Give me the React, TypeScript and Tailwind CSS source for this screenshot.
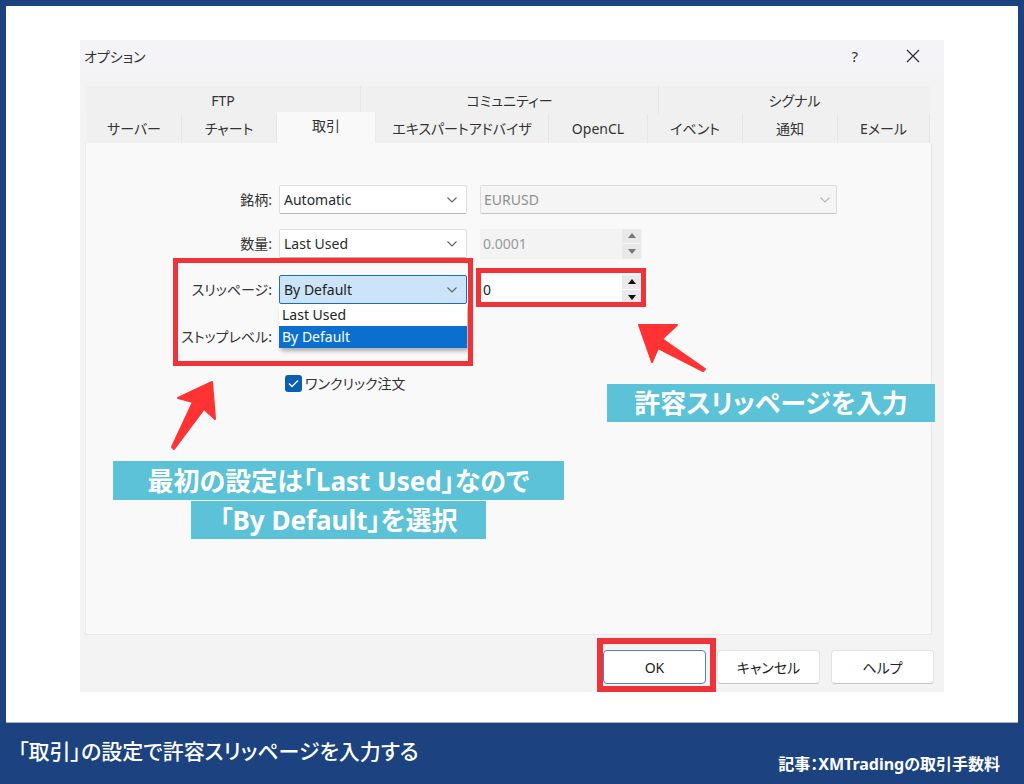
const jp = "font-['Noto_Sans','Noto_Sans_CJK_JP',sans-serif]";

function Chevron({ className = "text-[#5f5f5f]" }: { className?: string }) {
  return (
    <svg width="12" height="8" viewBox="0 0 12 8" className={className}>
      <path d="M1.5 1.5 L6 6 L10.5 1.5" fill="none" stroke="currentColor" strokeWidth="1.1" />
    </svg>
  );
}

function Combo({ text, active = false }: { text: string; active?: boolean }) {
  return (
    <div
      className={
        "flex w-[188px] h-[29px] items-center justify-between pl-[4px] pr-[8px] text-[14px] rounded-[2px] border " +
        (active
          ? "bg-[#cce4f7] border-[#1f6fb5] text-[#222]"
          : "bg-white border-[#dfdfdf] border-b-[#b5b5b5] text-[#2a2a2a]")
      }
    >
      <span>{text}</span>
      <Chevron />
    </div>
  );
}

function Spin({ text, disabled = false }: { text: string; disabled?: boolean }) {
  return (
    <div
      className={
        "flex w-[162px] h-[30px] items-center justify-between pl-[3px] pr-px text-[14px] " +
        (disabled ? "bg-[#f3f3f3] text-[#9a9a9a]" : "bg-white text-[#222]")
      }
    >
      <span>{text}</span>
      <div className="flex flex-col w-[19px] h-full gap-px">
        {[0, 1].map((i) => (
          <div key={i} className="flex flex-1 items-center justify-center bg-[#e9e9e9]">
            <svg width="8" height="5" viewBox="0 0 8 5" className={disabled ? "text-[#777]" : "text-[#111]"}>
              <path d={i === 0 ? "M4 0 L8 5 L0 5 Z" : "M0 0 L8 0 L4 5 Z"} fill="currentColor" />
            </svg>
          </div>
        ))}
      </div>
    </div>
  );
}

function Row({ label, children, className = "" }: { label: string; children?: React.ReactNode; className?: string }) {
  return (
    <div className={"flex items-center " + className}>
      <span className="w-[186px] pr-[7px] text-right text-[14px] text-[#333] [font-feature-settings:'palt']">{label}</span>
      {children}
    </div>
  );
}

function Tab({ w, text, active = false }: { w: string; text: string; active?: boolean }) {
  return (
    <div
      className={
        w +
        " flex items-center justify-center text-[14px] text-[#333] [font-feature-settings:'palt'] border-r " +
        (active ? "bg-[#f9f9f9] border-[#ebebeb] h-[31px] -mt-[2px] pb-[4px]" : "bg-[#f0f0f0] border-[#e6e6e6] h-[29px]")
      }
    >
      {text}
    </div>
  );
}

function Btn({ text, primary = false }: { text: string; primary?: boolean }) {
  return (
    <div
      className={
        "flex w-[103px] h-[34px] items-center justify-center rounded-[4px] text-[14px] text-[#222] [font-feature-settings:'palt'] border " +
        (primary ? "bg-white border-[#4f86b5]" : "bg-white border-[#e2e2e2] border-b-[#c4c4c4]")
      }
    >
      {text}
    </div>
  );
}

function Callout({ className, children }: { className: string; children: React.ReactNode }) {
  return (
    <div
      className={
        "absolute flex items-center justify-center bg-[#5bc2d8] text-white font-bold text-[26px] leading-none whitespace-nowrap [font-feature-settings:'palt'] " +
        className
      }
    >
      {children}
    </div>
  );
}

export default function App() {
  return (
    <div className={"relative w-[1024px] h-[784px] overflow-hidden flex flex-col bg-[#1c4380] " + jp}>
      <div className="mx-[6px] mt-[6px] h-[717px] bg-white border-b border-[#9fb2cf] px-[74px] pt-[34px]">
        <div className="flex flex-col w-[864px] h-[652px] bg-[#f3f3f3]">
          <div className="flex h-[32px] shrink-0 items-center justify-between bg-[#f3f3f8] pl-[4px] pr-[24px]">
            <span className="text-[14px] text-[#333] [font-feature-settings:'palt']">オプション</span>
            <div className="flex items-center gap-[48px]">
              <span className="text-[15px] text-[#333]">?</span>
              <svg width="14" height="14" viewBox="0 0 14 14" className="text-[#333]">
                <path d="M1 1 L13 13 M13 1 L1 13" stroke="currentColor" strokeWidth="1.3" />
              </svg>
            </div>
          </div>
          <div className="flex flex-col w-[847px] ml-[5px] mt-[14px]">
            <div className="flex w-[845px] h-[28px] ml-px">
              <div className="flex w-[275px] items-center justify-center bg-[#f0f0f0] border-r border-[#e6e6e6] text-[14px] text-[#333]">FTP</div>
              <div className="flex w-[298px] items-center justify-center bg-[#f0f0f0] border-r border-[#e6e6e6] text-[14px] text-[#333] [font-feature-settings:'palt']">コミュニティー</div>
              <div className="flex w-[271px] items-center justify-center bg-[#f0f0f0] text-[14px] text-[#333] [font-feature-settings:'palt']">シグナル</div>
            </div>
            <div className="flex h-[29px] ml-[2px] items-end">
              <Tab w="w-[95px]" text="サーバー" />
              <Tab w="w-[95px]" text="チャート" />
              <Tab w="w-[99px]" text="取引" active />
              <Tab w="w-[173px]" text="エキスパートアドバイザ" />
              <Tab w="w-[99px]" text="OpenCL" />
              <Tab w="w-[95px]" text="イベント" />
              <Tab w="w-[95px]" text="通知" />
              <Tab w="w-[92px]" text="Eメール" />
            </div>
            <div className="flex flex-col h-[492px] bg-[#f9f9f9] border border-[#e8e8e8] border-t-0 pt-[42px] pl-[7px]">
              <Row label="銘柄:" className="h-[29px]">
                <Combo text="Automatic" />
                <div className="flex w-[357px] h-[29px] ml-[13px] items-center justify-between pl-[3px] pr-[5px] bg-[#f5f5f5] border border-[#dcdcdc] border-b-[#c4c4c4] rounded-[2px] text-[14px] text-[#8f8f8f]">
                  <span>EURUSD</span>
                  <Chevron className="text-[#b5b5b5]" />
                </div>
              </Row>
              <Row label="数量:" className="h-[29px] mt-[15px]">
                <Combo text="Last Used" />
                <div className="ml-[13px]"><Spin text="0.0001" disabled /></div>
              </Row>
              <Row label="スリッページ:" className="h-[29px] mt-[17px]">
                <Combo text="By Default" active />
                <div className="ml-[13px]"><Spin text="0" /></div>
              </Row>
              <Row label="ストップレベル:" className="h-[29px] mt-[18px]" />
              <div className="flex items-center h-[20px] mt-[22px] ml-[192px] gap-[3px]">
                <div className="flex w-[17px] h-[17px] items-center justify-center rounded-[3px] bg-[#0a5fb4]">
                  <svg width="11" height="9" viewBox="0 0 11 9" className="text-white">
                    <path d="M1 4.5 L4 7.5 L10 1.5" fill="none" stroke="currentColor" strokeWidth="1.3" />
                  </svg>
                </div>
                <span className="text-[14px] text-[#333] [font-feature-settings:'palt']">ワンクリック注文</span>
              </div>
            </div>
          </div>
          <div className="flex justify-end gap-[11px] pr-[10px] mt-[15px]">
            <Btn text="OK" primary />
            <Btn text="キャンセル" />
            <Btn text="ヘルプ" />
          </div>
        </div>
      </div>

      <div className="flex flex-1 items-start justify-between pl-[18px] pr-[24px] pt-[13px]">
        <span className="text-[21px] leading-[30px] font-medium text-white [font-feature-settings:'palt']">「取引」の設定で許容スリッページを入力する</span>
        <span className="mt-[16px] text-[16px] leading-[24px] font-bold text-white [font-feature-settings:'palt']">記事：XMTradingの取引手数料</span>
      </div>

      {/* Dropdown list opened over the form */}
      <div className="absolute left-[279px] top-[304px] flex flex-col w-[188px] h-[44px] text-[14px] leading-[22px] shadow-[2px_3px_4px_rgba(0,0,0,0.3)]">
        <div className="h-[22px] pl-[3px] bg-white text-[#222]">Last Used</div>
        <div className="h-[22px] pl-[3px] bg-[#0a6fcf] text-white">By Default</div>
      </div>

      {/* Annotations */}
      <div className="absolute left-[173px] top-[258px] w-[300px] h-[108px] border-[5px] border-[#ef3338]" />
      <div className="absolute left-[476px] top-[268px] w-[170px] h-[39px] border-[5px] border-[#ef3338]" />
      <div className="absolute left-[597px] top-[638px] w-[119px] h-[54px] border-[6px] border-[#ef3338]" />

      <svg className="absolute left-0 top-0" width="1024" height="784" viewBox="0 0 1024 784">
        <path
          d="M212 382 L215 419 L204 409 L174 449 L172 447 L193 402 L178 398 Z"
          fill="#ff3333"
          stroke="#ff3333"
          strokeWidth="2"
          strokeLinejoin="round"
        />
        <path
          d="M639 325 L677 325 L662 339 L705 369 L703 371 L658 348 L652 362 Z"
          fill="#ff3333"
          stroke="#ff3333"
          strokeWidth="2"
          strokeLinejoin="round"
        />
      </svg>

      <Callout className="left-[607px] top-[384px] w-[328px] h-[38px]">許容スリッページを入力</Callout>
      <Callout className="left-[113px] top-[461px] w-[451px] h-[39px]">最初の設定は「Last Used」なので</Callout>
      <Callout className="left-[191px] top-[501px] w-[295px] h-[38px]">「By Default」を選択</Callout>
    </div>
  );
}
